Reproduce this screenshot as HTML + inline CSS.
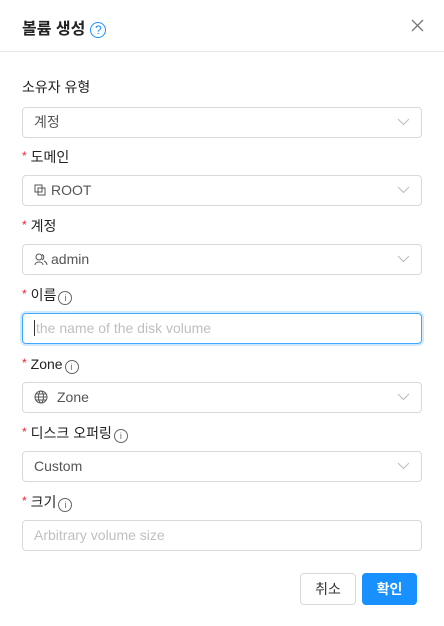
<!DOCTYPE html>
<html><head><meta charset="utf-8"><style>
body{margin:0;width:444px;height:626px;background:#fff;font-family:"Liberation Sans","Noto Sans CJK KR",sans-serif;color:rgba(0,0,0,.85);font-size:14px;position:relative;overflow:hidden}
.hdr{position:absolute;left:0;top:0;width:444px;height:51px;border-bottom:1px solid #e8e8e8}
.title{position:absolute;left:22px;top:15px;font-size:16px;font-weight:bold;color:#222}
.q{display:inline-block;width:14px;height:14px;border:1.5px solid #1890ff;border-radius:50%;color:#1890ff;font-size:12px;line-height:14px;text-align:center;vertical-align:0px;margin-left:5px;font-weight:normal}
.x{position:absolute;left:411px;top:19px}
.lbl{position:absolute;left:22px;font-size:14px;color:#222;line-height:20px}
.lbl .s{color:#f5222d;font-size:12px;margin-right:4px;vertical-align:2px}
.i{display:inline-block;width:12px;height:12px;border:1px solid #666;border-radius:50%;font-size:9px;line-height:12px;text-align:center;color:#666;margin-left:2px;vertical-align:-1px}
.box{position:absolute;left:22px;height:29px;border:1px solid #d9d9d9;border-radius:4px;line-height:29px;padding-left:11px;width:387px;color:#555}
.box svg.ch{position:absolute;right:11px;top:10px}
.ph{color:#bfbfbf}
.foc{border-color:#40a9ff;box-shadow:0 0 0 2px rgba(24,144,255,.2)}
.btn{position:absolute;top:573px;height:30px;width:54px;border-radius:4px;line-height:30px;text-align:center;font-size:14px}
</style></head><body>
<div class="hdr"></div>
<div class="title">볼륨 생성<span class="q">?</span></div>
<svg class="x" width="13" height="13" viewBox="0 0 13 13"><path d="M1 1L12 12M12 1L1 12" stroke="#777" stroke-width="1.3"/></svg>

<div class="lbl" style="top:77px">소유자 유형</div>
<div class="box" style="top:107px">계정<svg class="ch" width="13" height="8"><path d="M1 1L6.5 6.5L12 1" stroke="#bbb" fill="none"/></svg></div>

<div class="lbl" style="top:146px"><span class="s">*</span>도메인</div>
<div class="box" style="top:175px"><svg width="12" height="12" style="vertical-align:-1px;margin-right:5px"><rect x="1" y="1" width="7" height="7" fill="none" stroke="#555"/><rect x="4" y="4" width="7" height="7" fill="none" stroke="#555"/></svg>ROOT<svg class="ch" width="13" height="8"><path d="M1 1L6.5 6.5L12 1" stroke="#bbb" fill="none"/></svg></div>

<div class="lbl" style="top:215px"><span class="s">*</span>계정</div>
<div class="box" style="top:244px"><svg width="14" height="13" style="vertical-align:-2px;margin-right:3px"><circle cx="5" cy="4" r="3" fill="none" stroke="#555"/><path d="M1 12C1 8 9 8 9 12M8 1.5a3 3 0 0 1 0 5.5M10 8c2 1 3 2 3 4" fill="none" stroke="#555"/></svg>admin<svg class="ch" width="13" height="8"><path d="M1 1L6.5 6.5L12 1" stroke="#bbb" fill="none"/></svg></div>

<div class="lbl" style="top:284px"><span class="s">*</span>이름<span class="i">i</span></div>
<div class="box foc" style="top:313px"><span style="border-left:1px solid #333;margin-right:1px"></span><span class="ph">the name of the disk volume</span></div>

<div class="lbl" style="top:353px"><span class="s">*</span>Zone<span class="i">i</span></div>
<div class="box" style="top:382px"><svg width="14" height="14" style="vertical-align:-2px;margin-right:9px"><circle cx="7" cy="7" r="6" fill="none" stroke="#555"/><ellipse cx="7" cy="7" rx="2.5" ry="6" fill="none" stroke="#555"/><path d="M1 7H13M2 4H12M2 10H12" stroke="#555"/></svg>Zone<svg class="ch" width="13" height="8"><path d="M1 1L6.5 6.5L12 1" stroke="#bbb" fill="none"/></svg></div>

<div class="lbl" style="top:422px"><span class="s">*</span>디스크 오퍼링<span class="i">i</span></div>
<div class="box" style="top:451px">Custom<svg class="ch" width="13" height="8"><path d="M1 1L6.5 6.5L12 1" stroke="#bbb" fill="none"/></svg></div>

<div class="lbl" style="top:491px"><span class="s">*</span>크기<span class="i">i</span></div>
<div class="box" style="top:520px"><span class="ph">Arbitrary volume size</span></div>

<div class="btn" style="left:300px;border:1px solid #d9d9d9;color:#333">취소</div>
<div class="btn" style="left:362px;width:55px;height:32px;line-height:32px;background:#1890ff;color:#fff;font-weight:bold">확인</div>
</body></html>
